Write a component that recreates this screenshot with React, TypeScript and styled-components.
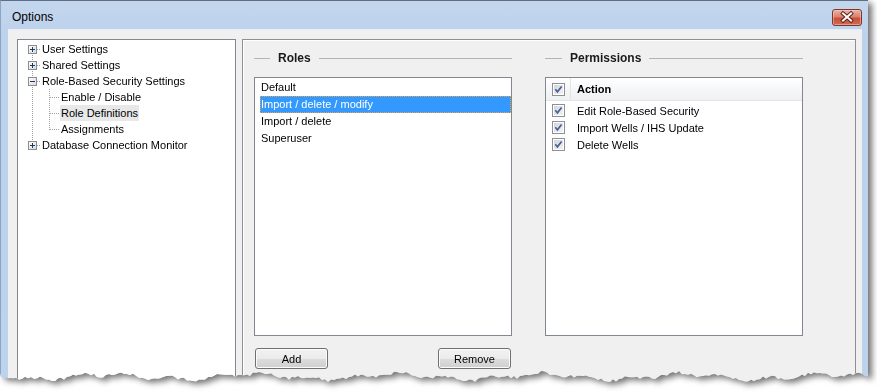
import React from 'react'
import styled, {createGlobalStyle} from 'styled-components'

const GlobalStyle = createGlobalStyle`
    html, body {
        margin: 0;
        background: #ffffff;
    }
    body {
        font-family: "Liberation Sans", Arial, sans-serif;
        font-size: 11px;
        color: #000;
    }
`;

// jagged "torn paper" bottom edge of the screenshot
const tearClip = (() => {
    const pts: string[] = ['0px 0px', '868px 0px']
    let seed = 11
    const rnd = () => {
        seed = (seed * 9301 + 49297) % 233280
        return seed / 233280
    }
    for (let x = 868; x > 0; x -= 3) {
        const y = 375 + 2.5 * Math.sin(x / 23) + 1.8 * Math.sin(x / 7.3) + rnd() * 3.2
        pts.push(`${x}px ${y.toFixed(1)}px`)
    }
    pts.push('0px 373px')
    return `polygon(${pts.join(', ')})`
})();

const Page = styled.div`
    width: 877px;
    height: 392px;
    overflow: hidden;
    background: #fff;
`;

const Shadow = styled.div`
    width: 868px;
    filter: drop-shadow(4px 3px 3px rgba(0, 0, 0, 0.55));
`;

const Window = styled.div`
    box-sizing: border-box;
    height: 388px;
    display: flex;
    flex-direction: column;
    background: linear-gradient(180deg, #c3d6ee 0%, #bcd1eb 10%, #bdd2ec 100%);
    border-top: 1px solid #5e6e84;
    border-left: 1px solid #8ea4c0;
    clip-path: ${tearClip};
`;

const TitleBar = styled.div`
    height: 28px;
    display: flex;
    justify-content: space-between;
    align-items: flex-start;
    padding: 8px 6px 0 11px;
    box-sizing: border-box;
`;

const Title = styled.span`
    font-size: 12px;
    line-height: 16px;
    color: #000;
`;

const CloseButton = styled.div`
    width: 30px;
    height: 17px;
    box-sizing: border-box;
    border: 1px solid #80352a;
    border-radius: 3px;
    background: linear-gradient(180deg, #eab1a4 0%, #d9826f 45%, #c6503a 55%, #cf6a52 100%);
    box-shadow: inset 0 0 0 1px rgba(255, 220, 210, 0.45);
    display: flex;
    align-items: center;
    justify-content: center;
`;

const Body = styled.div`
    flex: 1;
    display: flex;
    gap: 6px;
    margin: 0 6px 0 7px;
    padding: 9px 6px 0 9px;
    background: #f0f0f0;
    border-top: 1px solid #e4ecf6;
    box-sizing: border-box;
    min-height: 0;
`;

const Tree = styled.div`
    width: 219px;
    box-sizing: border-box;
    background: #fff;
    border: 1px solid #828790;
    padding-top: 1px;
`;

const TreeRow = styled.div`
    height: 16px;
    display: flex;
    align-items: center;
`;

const TreeLabel = styled.span<{$hot?: boolean}>`
    line-height: 16px;
    padding: 0 1px;
    background: ${(p) => (p.$hot ? '#e8e8e8' : 'transparent')};
    white-space: nowrap;
`;

const RightPanel = styled.div`
    flex: 1;
    display: flex;
    gap: 33px;
    padding: 9px 0 0 11px;
    border: 1px solid #8e8f94;
    box-shadow: inset 1px 1px 0 #ffffff;
    box-sizing: border-box;
`;

const Column = styled.div<{$w: number}>`
    width: ${(p) => p.$w}px;
    display: flex;
    flex-direction: column;
`;

const GroupHeader = styled.div`
    height: 18px;
    display: flex;
    align-items: center;
    font-size: 12px;
    font-weight: 700;
    color: #1a1a1a;
`;

const Rule = styled.span<{$w?: number}>`
    height: 1px;
    background: #b4b4b4;
    ${(p) => (p.$w ? `width: ${p.$w}px; margin-right: 8px;` : 'flex: 1; margin-left: 8px;')}
`;

const ListBox = styled.div`
    margin-top: 10px;
    height: 259px;
    box-sizing: border-box;
    border: 1px solid #828790;
    background: #fff;
`;

const RoleList = styled.div`
    padding: 1px 0 0 5px;
`;

const RoleItem = styled.div<{$selected?: boolean}>`
    height: 17px;
    line-height: 15px;
    box-sizing: border-box;
    padding-left: 0;
    border: 1px dotted ${(p) => (p.$selected ? '#f0a23c' : 'transparent')};
    background: ${(p) => (p.$selected ? '#3399ff' : 'transparent')};
    color: ${(p) => (p.$selected ? '#fff' : '#000')};
`;

const HeaderRow = styled.div`
    height: 23px;
    display: flex;
    align-items: stretch;
    background: linear-gradient(180deg, #ffffff 0%, #f6f7f9 50%, #eff0f2 100%);
    border-bottom: 1px solid #e3e4e7;
    box-sizing: border-box;
    font-weight: 700;
`;

const PermRows = styled.div`
    padding-top: 1px;
`;

const PermRow = styled.div`
    height: 17px;
    display: flex;
    align-items: stretch;
`;

const CheckCell = styled.div<{$divider?: boolean}>`
    width: 25px;
    box-sizing: border-box;
    padding-left: 6px;
    display: flex;
    align-items: center;
    border-right: 1px solid ${(p) => (p.$divider ? '#e2e3e6' : 'transparent')};
`;

const CellLabel = styled.span`
    display: flex;
    align-items: center;
    padding-left: 6px;
    color: #000;
`;

const ButtonRow = styled.div`
    margin-top: 12px;
    display: flex;
    justify-content: space-between;
    padding: 0 1px;
`;

const Button = styled.button`
    width: 73px;
    height: 21px;
    border: 1px solid #707070;
    border-radius: 3px;
    background: linear-gradient(180deg, #f2f2f2 0%, #ebebeb 50%, #dddddd 51%, #cfcfcf 100%);
    box-shadow: inset 0 0 0 1px #fbfbfb;
    font-family: "Liberation Sans", Arial, sans-serif;
    font-size: 11px;
    color: #000;
    padding: 0;
`;

const CloseGlyph = () => (
    <svg width="28" height="15" viewBox="0 0 28 15">
        <path d="M10 3.5 L18 10.5 M18 3.5 L10 10.5" stroke="#5c1b10" strokeWidth="3.8" strokeLinecap="square"/>
        <path d="M10 3.5 L18 10.5 M18 3.5 L10 10.5" stroke="#ffffff" strokeWidth="2" strokeLinecap="square"/>
    </svg>
);

const CheckBox = () => (
    <svg width="13" height="13" viewBox="0 0 13 13">
        <defs>
            <linearGradient id="cbFill" x1="0" y1="0" x2="1" y2="1">
                <stop offset="0" stopColor="#d3d5de"/>
                <stop offset="1" stopColor="#f3f3f5"/>
            </linearGradient>
        </defs>
        <rect x="0.5" y="0.5" width="12" height="12" fill="#fff" stroke="#8f9094"/>
        <rect x="2" y="2" width="9" height="9" fill="url(#cbFill)"/>
        <path d="M3.3 6.3 L5.4 8.8 L9.6 3.4" fill="none" stroke="#4b5f8f" strokeWidth="1.7"/>
    </svg>
);

type Expander = 'plus' | 'minus'

type Node = {
    label: string
    level: 0 | 1
    expander?: Expander
    first?: boolean
    last?: boolean
    lastChild?: boolean
    hot?: boolean
}

const tree: Node[] = [
    {label: 'User Settings', level: 0, expander: 'plus', first: true},
    {label: 'Shared Settings', level: 0, expander: 'plus'},
    {label: 'Role-Based Security Settings', level: 0, expander: 'minus'},
    {label: 'Enable / Disable', level: 1},
    {label: 'Role Definitions', level: 1, hot: true},
    {label: 'Assignments', level: 1, lastChild: true},
    {label: 'Database Connection Monitor', level: 0, expander: 'plus', last: true},
];

const dot = {stroke: '#a0a0a0', strokeDasharray: '1 1', shapeRendering: 'crispEdges' as const};

function Gutter({node}: {node: Node}) {
    if (node.level === 1) {
        return <svg width="42" height="16">
            <line x1="14.5" y1="0" x2="14.5" y2="16" {...dot}/>
            <line x1="31.5" y1="0" x2="31.5" y2={node.lastChild ? 9 : 16} {...dot}/>
            <line x1="32" y1="8.5" x2="41" y2="8.5" {...dot}/>
        </svg>
    }
    return <svg width="23" height="16">
        <line x1="14.5" y1={node.first ? 8 : 0} x2="14.5" y2={node.last ? 8 : 16} {...dot}/>
        <line x1="19" y1="8.5" x2="23" y2="8.5" {...dot}/>
        <defs>
            <linearGradient id="boxFill" x1="0" y1="0" x2="1" y2="1">
                <stop offset="0" stopColor="#ffffff"/>
                <stop offset="1" stopColor="#d8d8d8"/>
            </linearGradient>
        </defs>
        <rect x="10.5" y="4.5" width="8" height="8" fill="url(#boxFill)" stroke="#8c8c8c" shapeRendering="crispEdges"/>
        <line x1="12" y1="8.5" x2="17" y2="8.5" stroke="#1d3a6e" shapeRendering="crispEdges"/>
        {node.expander === 'plus' &&
            <line x1="14.5" y1="6" x2="14.5" y2="11" stroke="#1d3a6e" shapeRendering="crispEdges"/>}
    </svg>
}

const roles = ['Default', 'Import / delete / modify', 'Import / delete', 'Superuser'];
const permissions = ['Edit Role-Based Security', 'Import Wells / IHS Update', 'Delete Wells'];

export default function App(): JSX.Element {
    return <Page>
        <GlobalStyle/>
        <Shadow>
            <Window>
                <TitleBar>
                    <Title>Options</Title>
                    <CloseButton><CloseGlyph/></CloseButton>
                </TitleBar>
                <Body>
                    <Tree>
                        {tree.map((n) => (
                            <TreeRow key={n.label}>
                                <Gutter node={n}/>
                                <TreeLabel $hot={n.hot}>{n.label}</TreeLabel>
                            </TreeRow>
                        ))}
                    </Tree>
                    <RightPanel>
                        <Column $w={258}>
                            <GroupHeader><Rule $w={16}/>Roles<Rule/></GroupHeader>
                            <ListBox>
                                <RoleList>
                                    {roles.map((r, i) => <RoleItem key={r} $selected={i === 1}>{r}</RoleItem>)}
                                </RoleList>
                            </ListBox>
                            <ButtonRow>
                                <Button>Add</Button>
                                <Button>Remove</Button>
                            </ButtonRow>
                        </Column>
                        <Column $w={258}>
                            <GroupHeader><Rule $w={17}/>Permissions<Rule/></GroupHeader>
                            <ListBox>
                                <HeaderRow>
                                    <CheckCell $divider><CheckBox/></CheckCell>
                                    <CellLabel>Action</CellLabel>
                                </HeaderRow>
                                <PermRows>
                                    {permissions.map((p) => (
                                        <PermRow key={p}>
                                            <CheckCell><CheckBox/></CheckCell>
                                            <CellLabel>{p}</CellLabel>
                                        </PermRow>
                                    ))}
                                </PermRows>
                            </ListBox>
                        </Column>
                    </RightPanel>
                </Body>
            </Window>
        </Shadow>
    </Page>
}
